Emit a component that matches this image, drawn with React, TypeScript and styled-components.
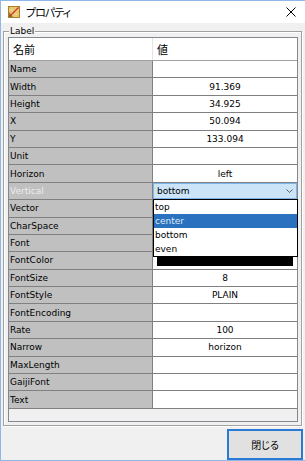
import React from 'react';
import styled, { createGlobalStyle } from 'styled-components';

const GlobalStyle = createGlobalStyle`
    body {
        margin: 0;
        background: #ffffff;
    }
`;

const Window = styled.div`
    width: 305px;
    height: 461px;
    box-sizing: border-box;
    border: 1px solid #8fb8e8;
    border-right: none;
    display: flex;
    flex-direction: column;
    background: #f0f0f0;
    font-family: 'DejaVu Sans', sans-serif;
    font-size: 9px;
    color: #000;
`;

const TitleBar = styled.div`
    height: 22px;
    flex: none;
    background: #ffffff;
    display: flex;
    align-items: center;
    padding: 0 9px 0 7px;
`;

const TitleText = styled.span`
    margin-left: 6px;
    flex: 1;
    font-family: 'Noto Sans CJK JP', sans-serif;
    font-size: 11px;
    letter-spacing: -1px;
    font-feature-settings: 'palt';
    line-height: 22px;
`;

const Body = styled.div`
    flex: 1;
    display: flex;
    flex-direction: column;
    padding: 8px 2px 0 2px;
`;

const GroupBox = styled.div`
    position: relative;
    height: 395px;
    margin-right: 1px;
    box-sizing: border-box;
    border: 1px solid #a0a0a0;
    box-shadow: inset 1px 1px 0 #ffffff, 1px 1px 0 #ffffff;
    padding: 5px 3px 3px 4px;
`;

const Legend = styled.span`
    position: absolute;
    top: -7px;
    left: 5px;
    padding: 0 1px;
    line-height: 12px;
    background: #f0f0f0;
`;

const ScrollPane = styled.div`
    height: 385px;
    box-sizing: border-box;
    border: 1px solid #828790;
    background: #f0f0f0;
`;

const Header = styled.div`
    display: grid;
    grid-template-columns: 144px 1fr;
    height: 23px;
    box-sizing: border-box;
    border-bottom: 1px solid #a0a0a0;
    background: #ffffff;
`;

const HeaderCell = styled.div<{ $divider?: boolean }>`
    display: flex;
    align-items: center;
    padding-left: 4px;
    border-right: ${({ $divider }) => ($divider ? '1px solid #e5e5e5' : 'none')};
    font-family: 'Noto Sans CJK JP', sans-serif;
    font-size: 11px;
`;

const Rows = styled.div`
    display: grid;
    grid-template-columns: 144px 1fr;
    grid-auto-rows: 17.4px;
`;

const LabelCell = styled.div<{ $dim?: boolean }>`
    display: flex;
    align-items: center;
    padding-left: 1px;
    background: #c0c0c0;
    border-right: 1px solid #808080;
    border-bottom: 1px solid #808080;
    color: ${({ $dim }) => ($dim ? '#ececec' : '#000000')};
    white-space: nowrap;
`;

const ValueCell = styled.div<{ $raised?: boolean }>`
    position: relative;
    display: flex;
    align-items: center;
    justify-content: center;
    background: #ffffff;
    border-bottom: 1px solid #808080;
    z-index: ${({ $raised }) => ($raised ? 2 : 'auto')};
`;

const Combo = styled.div`
    width: 100%;
    height: 100%;
    box-sizing: border-box;
    display: flex;
    align-items: center;
    justify-content: space-between;
    padding: 0 3px;
    background: #cce4f7;
    border: 1px solid #7eb4ea;
`;

const DropList = styled.div`
    position: absolute;
    top: 100%;
    left: 0;
    right: -1px;
    border: 1px solid #000000;
    background: #ffffff;
`;

const DropItem = styled.div<{ $active?: boolean }>`
    height: 14px;
    line-height: 14px;
    padding-left: 1px;
    background: ${({ $active }) => ($active ? '#2a72c0' : '#ffffff')};
    color: ${({ $active }) => ($active ? '#dce8f5' : '#000000')};
`;

const ColorBar = styled.div<{ $color: string }>`
    flex: 1;
    height: 12px;
    margin: 0 4px 0 4px;
    background: ${({ $color }) => $color};
`;

const Footer = styled.div`
    display: flex;
    justify-content: flex-end;
    margin-top: 3px;
`;

const Button = styled.button`
    width: 76px;
    height: 31px;
    box-sizing: border-box;
    margin: 0;
    padding: 0;
    border: 2px solid #2a7ad4;
    background: #e1e1e1;
    font-family: 'Noto Sans CJK JP', sans-serif;
    font-size: 10px;
    font-feature-settings: 'palt';
    color: #000;
`;

const AppIcon = () => (
    <svg width="12" height="12" viewBox="0 0 12 12">
        <rect x="0.5" y="0.5" width="11" height="11" fill="#e6c165" stroke="#a8802c" />
        <path d="M4 1v10M8 1v10M1 4h10M1 8h10" stroke="#f4dd98" strokeWidth="0.8" />
        <path d="M1 11V6l4 5z" fill="#8d7a3a" />
        <path d="M1.5 10.5L10.5 1.5" stroke="#c8342a" strokeWidth="1.3" />
    </svg>
);

const CloseIcon = () => (
    <svg width="10" height="10" viewBox="0 0 10 10">
        <path d="M0.5 0.5L9.5 9.5M9.5 0.5L0.5 9.5" stroke="#000" strokeWidth="1" />
    </svg>
);

const Chevron = () => (
    <svg width="7" height="4" viewBox="0 0 7 4">
        <path d="M0.5 0.5L3.5 3.5L6.5 0.5" stroke="#606060" strokeWidth="1" fill="none" />
    </svg>
);

type Row = { name: string; value?: string; kind?: 'combo' | 'color' };

const rows: Row[] = [
    { name: 'Name' },
    { name: 'Width', value: '91.369' },
    { name: 'Height', value: '34.925' },
    { name: 'X', value: '50.094' },
    { name: 'Y', value: '133.094' },
    { name: 'Unit' },
    { name: 'Horizon', value: 'left' },
    { name: 'Vertical', value: 'bottom', kind: 'combo' },
    { name: 'Vector' },
    { name: 'CharSpace' },
    { name: 'Font' },
    { name: 'FontColor', kind: 'color' },
    { name: 'FontSize', value: '8' },
    { name: 'FontStyle', value: 'PLAIN' },
    { name: 'FontEncoding' },
    { name: 'Rate', value: '100' },
    { name: 'Narrow', value: 'horizon' },
    { name: 'MaxLength' },
    { name: 'GaijiFont' },
    { name: 'Text' },
];

const options = ['top', 'center', 'bottom', 'even'];

const App: React.FC = () => {
    return (
        <>
            <GlobalStyle />
            <Window>
                <TitleBar>
                    <AppIcon />
                    <TitleText>プロパティ</TitleText>
                    <CloseIcon />
                </TitleBar>
                <Body>
                    <GroupBox>
                        <Legend>Label</Legend>
                        <ScrollPane>
                            <Header>
                                <HeaderCell $divider>名前</HeaderCell>
                                <HeaderCell>値</HeaderCell>
                            </Header>
                            <Rows>
                                {rows.map((row) => (
                                    <React.Fragment key={row.name}>
                                        <LabelCell $dim={row.kind === 'combo'}>{row.name}</LabelCell>
                                        <ValueCell $raised={row.kind === 'combo'}>
                                            {row.kind === 'combo' && (
                                                <>
                                                    <Combo>
                                                        <span>{row.value}</span>
                                                        <Chevron />
                                                    </Combo>
                                                    <DropList>
                                                        {options.map((opt) => (
                                                            <DropItem key={opt} $active={opt === 'center'}>{opt}</DropItem>
                                                        ))}
                                                    </DropList>
                                                </>
                                            )}
                                            {row.kind === 'color' && <ColorBar $color="#000000" />}
                                            {!row.kind && row.value}
                                        </ValueCell>
                                    </React.Fragment>
                                ))}
                            </Rows>
                        </ScrollPane>
                    </GroupBox>
                    <Footer>
                        <Button>閉じる</Button>
                    </Footer>
                </Body>
            </Window>
        </>
    );
};

export default App;
